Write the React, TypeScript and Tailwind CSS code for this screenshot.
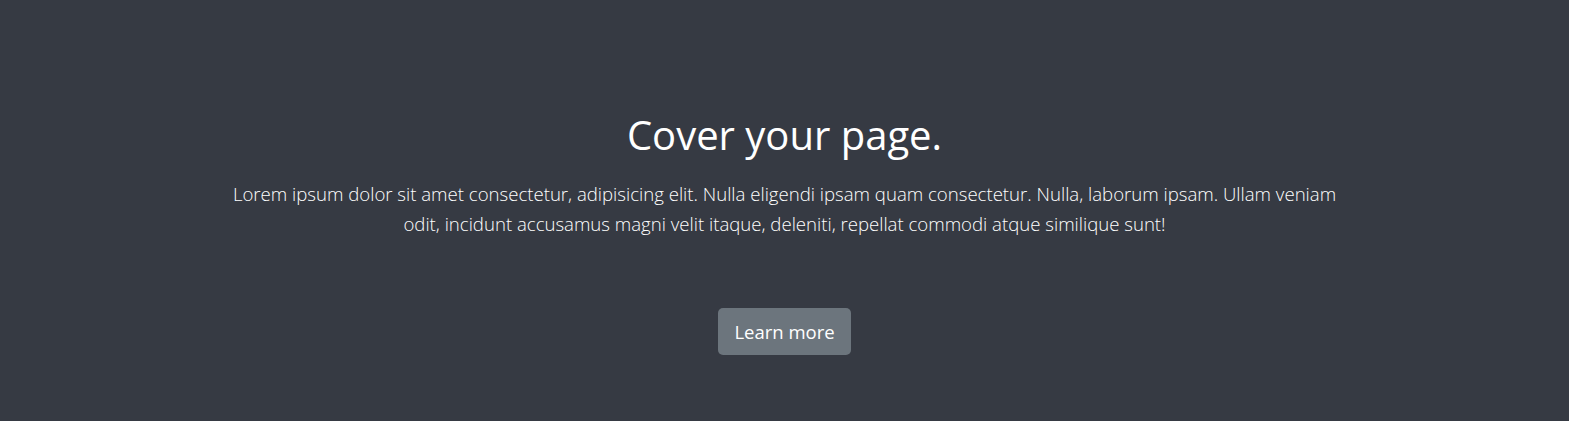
export default function App() {
  return (
    <div className="h-[421px] w-full bg-[#363a43] text-white flex flex-col items-center" style={{ fontFamily: '"Open Sans", "Noto Sans", sans-serif' }}>
      <div className="w-[1110px] pt-[111px] text-center">
        <h1 className="text-[40px] leading-[48px] font-normal">Cover your page.</h1>
        <p className="mt-[20px] text-[18.6px] leading-[30px] font-light">
          Lorem ipsum dolor sit amet consectetur, adipisicing elit. Nulla eligendi ipsam quam consectetur. Nulla, laborum ipsam. Ullam veniam odit, incidunt accusamus magni velit itaque, deleniti, repellat commodi atque similique sunt!
        </p>
        <div className="mt-[69px] flex justify-center">
          <button className="h-[47px] w-[133px] rounded-[5px] bg-[#6c757d] text-[18.5px] font-normal text-white">Learn more</button>
        </div>
      </div>
    </div>
  );
}
